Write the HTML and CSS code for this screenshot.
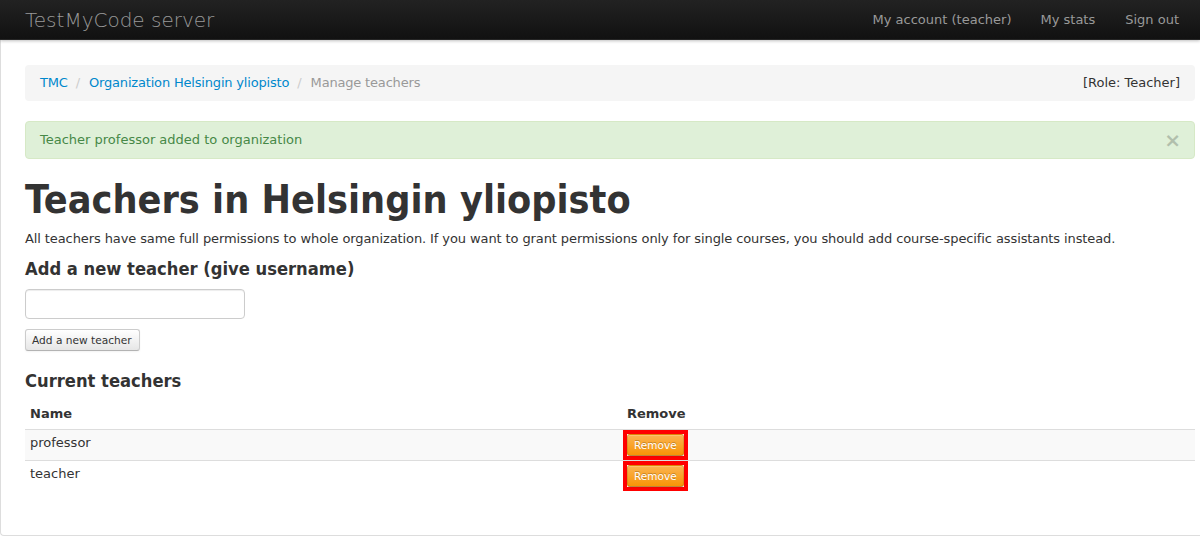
FILE: index.html
```html
<!DOCTYPE html>
<html>
<head>
<meta charset="utf-8">
<title>TestMyCode server</title>
<link rel="stylesheet" href="styles.css">
</head>
<body>
<header class="navbar">
  <div class="nav-inner">
    <a class="brand" href="#">TestMyCode server</a>
    <nav class="nav-links">
      <a href="#">My account (teacher)</a>
      <a href="#">My stats</a>
      <a href="#">Sign out</a>
    </nav>
  </div>
</header>
<main class="container">
  <div class="breadcrumb">
    <div class="crumbs"><a href="#">TMC</a> <span class="divider">/</span> <a href="#">Organization Helsingin yliopisto</a> <span class="divider">/</span> <span class="active">Manage teachers</span></div>
    <div class="role">[Role: Teacher]</div>
  </div>
  <div class="alert">
    <span>Teacher professor added to organization</span>
    <span class="close">×</span>
  </div>
  <h1 class="title">Teachers in Helsingin yliopisto</h1>
  <p class="lead-text">All teachers have same full permissions to whole organization. If you want to grant permissions only for single courses, you should add course-specific assistants instead.</p>
  <h3 class="sub">Add a new teacher (give username)</h3>
  <form class="add-form">
    <input class="text-input" type="text">
    <button class="btn-mini" type="button">Add a new teacher</button>
  </form>
  <h3 class="sub current">Current teachers</h3>
  <table class="teachers">
    <thead>
      <tr><th class="col-name">Name</th><th class="col-remove">Remove</th></tr>
    </thead>
    <tbody>
      <tr class="odd"><td>professor</td><td class="cell-remove"><span class="hl"><button class="btn-warning" type="button">Remove</button></span></td></tr>
      <tr><td>teacher</td><td class="cell-remove"><span class="hl"><button class="btn-warning" type="button">Remove</button></span></td></tr>
    </tbody>
  </table>
</main>
</body>
</html>
```
FILE: styles.css
```css
html, body {
  margin: 0;
  padding: 0;
  background: #fff;
  overflow: hidden;
}
body {
  font-family: "DejaVu Sans", sans-serif;
  font-size: 13px;
  line-height: 20px;
  color: #333;
}
a { color: #0088cc; text-decoration: none; }

.navbar {
  height: 40px;
  background: linear-gradient(#222222, #111111);
  border-bottom: 1px solid #252525;
  box-sizing: border-box;
  box-shadow: 0 1px 3px rgba(0,0,0,0.25);
  position: relative;
  z-index: 2;
}
.nav-inner {
  width: 1170px;
  margin-left: 25px;
  display: flex;
  justify-content: space-between;
  align-items: center;
  height: 40px;
}
.brand {
  font-size: 20px;
  font-weight: 200;
  color: #999;
  line-height: 20px;
  padding: 10px 0;
}
.nav-links { display: flex; margin-right: 1px; }
.nav-links a {
  color: #999;
  padding: 10px 15px;
  line-height: 20px;
}
.nav-links a:first-child { padding-right: 14px; }

.container {
  border-left: 1px solid #ddd;
  border-bottom: 1px solid #ddd;
  border-bottom-left-radius: 4px;
  padding: 25px 5px 44px 24px;
  box-sizing: border-box;
}
.breadcrumb {
  width: 1170px;
  box-sizing: border-box;
  background: #f5f5f5;
  border-radius: 4px;
  padding: 8px 15px;
  display: flex;
  justify-content: space-between;
  margin-bottom: 20px;
}
.crumbs { letter-spacing: -0.18px; }
.divider { color: #ccc; padding: 0 5px 0 4px; letter-spacing: 0; }
.active { color: #999; }

.alert {
  width: 1170px;
  box-sizing: border-box;
  background: #dff0d8;
  border: 1px solid #d6e9c6;
  color: #468847;
  border-radius: 4px;
  padding: 8px 14px;
  display: flex;
  justify-content: space-between;
  align-items: center;
}
.close {
  font-size: 20px;
  font-weight: bold;
  color: #000;
  opacity: 0.2;
  line-height: 20px;
  margin-right: -1px;
}

.title {
  font-family: "DejaVu Sans Condensed", "DejaVu Sans", sans-serif;
  font-size: 39.2px;
  line-height: 40px;
  font-weight: bold;
  margin: 21px 0 0;
}
.lead-text { margin: 9px 0 0; letter-spacing: -0.1px; }
.sub {
  font-family: "DejaVu Sans Condensed", "DejaVu Sans", sans-serif;
  font-size: 18.2px;
  line-height: 20px;
  font-weight: bold;
  margin: 10px 0 0;
}
.add-form {
  margin: 0;
  display: flex;
  flex-direction: column;
  align-items: flex-start;
}
.text-input {
  margin-top: 10px;
  width: 220px;
  height: 30px;
  box-sizing: border-box;
  border: 1px solid #ccc;
  border-radius: 4px;
  box-shadow: inset 0 1px 1px rgba(0,0,0,0.075);
  padding: 4px 6px;
  font-family: inherit;
  font-size: 13px;
}
.btn-mini {
  margin-top: 10px;
  height: 22px;
  padding: 0 7px 0 6px;
  font-family: inherit;
  font-size: 10.6px;
  line-height: 20px;
  color: #333;
  background: linear-gradient(#ffffff, #e6e6e6);
  border: 1px solid #cccccc;
  border-bottom-color: #b3b3b3;
  border-radius: 3px;
  box-shadow: inset 0 1px 0 rgba(255,255,255,0.2), 0 1px 2px rgba(0,0,0,0.05);
}
.sub.current { margin-top: 20px; }

.teachers {
  margin-top: 8px;
  width: 1170px;
  border-collapse: collapse;
  border-spacing: 0;
}
.teachers th, .teachers td {
  text-align: left;
  padding: 5px 5px;
  line-height: 20px;
  vertical-align: top;
}
.teachers td { padding: 3px 5px 7px; }
.teachers th { font-weight: bold; }
.teachers tbody td { border-top: 1px solid #ddd; }
.col-name { width: 587px; }
.teachers tr.odd td { background: #f9f9f9; }
.teachers td.cell-remove { padding: 0 1px; }
.hl {
  display: inline-block;
  border: 4px solid #ff0000;
  vertical-align: top;
}
.btn-warning {
  display: block;
  height: 22px;
  padding: 0 6px;
  font-family: inherit;
  font-size: 10.5px;
  line-height: 20px;
  color: #fff;
  text-shadow: 0 -1px 0 rgba(0,0,0,0.25);
  background: linear-gradient(#fbb450, #f89406);
  border: 1px solid rgba(0,0,0,0.1);
  border-bottom-color: rgba(0,0,0,0.25);
  border-radius: 3px;
  box-shadow: inset 0 1px 0 rgba(255,255,255,0.2), 0 1px 2px rgba(0,0,0,0.05);
}
```
